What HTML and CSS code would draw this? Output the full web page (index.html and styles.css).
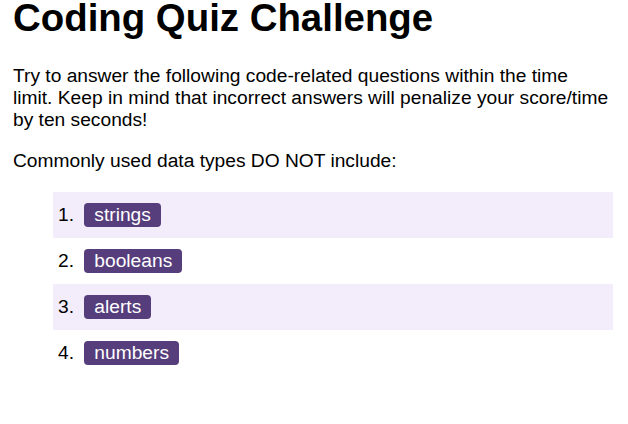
FILE: index.html
```html
<!DOCTYPE html>
<html lang="en">
<head>
<meta charset="utf-8">
<title>Coding Quiz Challenge</title>
<link rel="stylesheet" href="styles.css">
</head>
<body>
<main class="quiz">
  <h1 class="title">Coding Quiz Challenge</h1>
  <p class="intro">Try to answer the following code-related questions within the time limit. Keep in mind that incorrect answers will penalize your score/time by ten seconds!</p>
  <p class="question">Commonly used data types DO NOT include:</p>
  <ol class="choices">
    <li class="choice"><span class="answer">strings</span></li>
    <li class="choice"><span class="answer">booleans</span></li>
    <li class="choice"><span class="answer">alerts</span></li>
    <li class="choice"><span class="answer">numbers</span></li>
  </ol>
</main>
</body>
</html>
```
FILE: styles.css
```css
html, body {
  margin: 0;
  padding: 0;
  background: #ffffff;
}
body {
  font-family: "Liberation Sans", Arial, sans-serif;
  font-size: 19.2px;
  color: #000000;
}
.quiz {
  padding: 0 15px 0 13px;
}
.title {
  font-size: 38.4px;
  font-weight: bold;
  margin: 0 0 29px;
  line-height: 36px;
}
.intro {
  margin: 0 4px 19px 0;
}
.question {
  margin: 0 0 20px;
}
.choices {
  margin: 0;
  padding: 0 0 0 40px;
  list-style-position: inside;
}
.choice {
  padding: 11px 5px;
  height: 24px;
  line-height: 24px;
}
.choice:nth-child(odd) {
  background: #f3edfb;
}
.answer {
  display: inline-block;
  margin-left: 5px;
  padding: 0 10px;
  line-height: 24px;
  background: #563d7c;
  color: #ffffff;
  border-radius: 4px;
}
```
